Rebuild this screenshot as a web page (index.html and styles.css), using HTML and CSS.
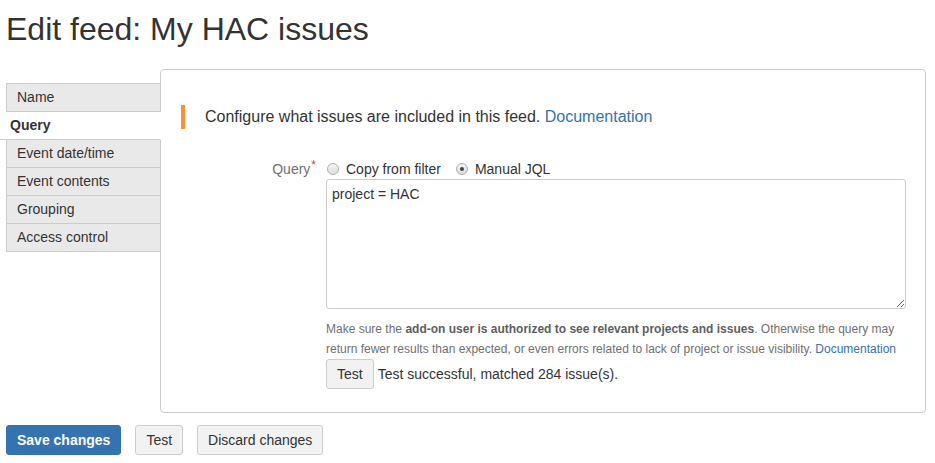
FILE: index.html
```html
<!DOCTYPE html>
<html lang="en">
<head>
    <meta charset="UTF-8">
    <meta name="viewport" content="width=device-width, initial-scale=1.0">
    <title>Edit feed: My HAC issues</title>
    <link rel="stylesheet" href="styles.css">
</head>
<body>

    <div class="page">
        <h1 class="page-title">Edit feed: My HAC issues</h1>

        <div class="editor">
            <ul class="tabs">
                <li class="tab">Name</li>
                <li class="tab active">Query</li>
                <li class="tab">Event date/time</li>
                <li class="tab">Event contents</li>
                <li class="tab">Grouping</li>
                <li class="tab">Access control</li>
            </ul>

            <div class="panel">
                <div class="message">Configure what issues are included in this feed. <a href="#">Documentation</a></div>

                <div class="field-group">
                    <label class="field-label">Query<span class="required">*</span></label>
                    <div class="field">
                        <div class="radios">
                            <label class="radio"><input type="radio" name="source">Copy from filter</label>
                            <label class="radio"><input type="radio" name="source" checked>Manual JQL</label>
                        </div>
                        <textarea class="jql">project = HAC</textarea>
                        <p class="help">Make sure the <strong>add-on user is authorized to see relevant projects and issues</strong>. Otherwise the query may return fewer results than expected, or even errors related to lack of project or issue visibility. <a href="#">Documentation</a></p>
                        <div class="test-row">
                            <button class="btn">Test</button>
                            <span>Test successful, matched 284 issue(s).</span>
                        </div>
                    </div>
                </div>
            </div>
        </div>

        <div class="actions">
            <button class="btn btn-primary">Save changes</button>
            <button class="btn">Test</button>
            <button class="btn">Discard changes</button>
        </div>
    </div>

</body>
</html>
```

FILE: styles.css
```css
body { margin: 0; font-family: "Liberation Sans", Arial, sans-serif; font-size: 14px; color: #333; background: #fff; }
a { color: #3572b0; text-decoration: none; }
.page { padding: 0 9px 0 6px; }
.page-title { font-size: 32px; font-weight: normal; line-height: 1.1; margin: 12px 0 22px 0; color: #333; }

.editor { display: flex; align-items: flex-start; }
.tabs { list-style: none; margin: 14px 0 0 0; padding: 0; width: 155px; flex-shrink: 0; border-top: 1px solid #ccc; }
.tab { height: 27px; line-height: 27px; padding-left: 10px; background: #e9e9e9; border: 1px solid #ccc; border-top: none; }
.tab.active { position: relative; z-index: 1; margin-left: -6px; padding-left: 10px; border-left: none; border-right-color: #fff; background: #fff; font-weight: bold; }

.panel { flex: 1; margin-left: -1px; border: 1px solid #ccc; border-radius: 4px; padding: 20px 19px 23px 20px; background: #fff; }
.message { margin-top: 15px; border-left: 4px solid #f79232; padding-left: 20px; font-size: 16px; line-height: 24px; }

.field-group { display: grid; grid-template-columns: 135px 1fr; column-gap: 10px; margin-top: 30px; }
.field-label { text-align: right; line-height: 20px; color: #707070; }
.required { color: #d04437; font-size: 12px; vertical-align: top; line-height: 12px; margin-left: 1px; }

.radios { display: flex; gap: 14px; line-height: 20px; }
.radio { display: flex; align-items: center; }
.radio input { appearance: none; -webkit-appearance: none; width: 12px; height: 12px; margin: 0 7px 0 1px; border: 1px solid #b0b0b0; border-radius: 50%; background: linear-gradient(#f4f4f4, #dcdcdc); position: relative; }
.radio input:checked::after { content: ""; position: absolute; left: 3px; top: 3px; width: 4px; height: 4px; border-radius: 50%; background: #444; }

.jql { display: block; box-sizing: border-box; width: 100%; height: 130px; margin: 0; padding: 4px 5px; border: 1px solid #ccc; border-radius: 3px; font-family: "Liberation Sans", Arial, sans-serif; font-size: 14px; line-height: 20px; color: #333; }
.help { margin: 10px 0 0 0; font-size: 12px; line-height: 20px; color: #707070; }
.help strong { color: #5e5e5e; }
.test-row { display: flex; align-items: center; gap: 4px; }

.btn { height: 30px; padding: 0 10px; border: 1px solid #ccc; border-radius: 3px; background: #f2f2f2; color: #333; font-family: "Liberation Sans", Arial, sans-serif; font-size: 14px; }
.btn-primary { background: #3572b0; border-color: #3572b0; color: #fff; font-weight: bold; }
.actions { display: flex; gap: 14px; margin-top: 12px; }
```
